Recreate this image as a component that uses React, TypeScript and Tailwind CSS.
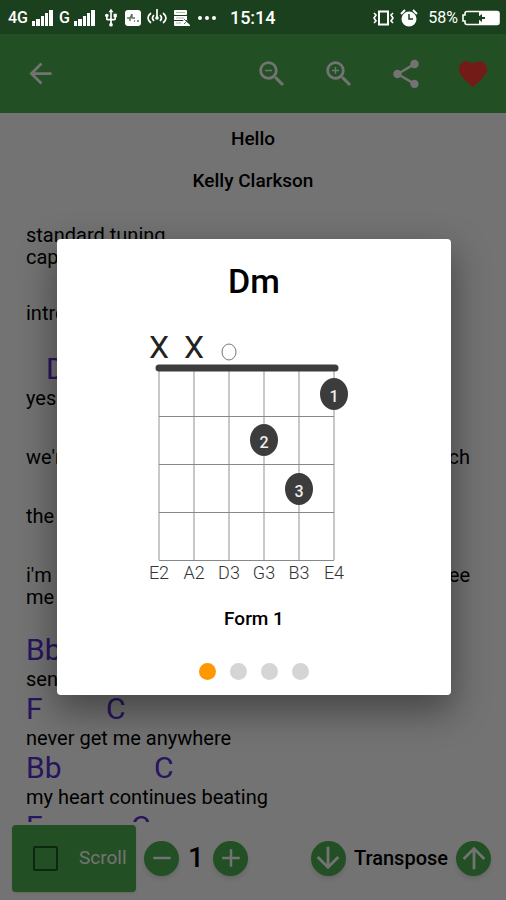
import { MdAdd, MdArrowBack, MdArrowDownward, MdArrowUpward, MdFavorite, MdRemove, MdShare, MdUsb, MdZoomIn, MdZoomOut } from 'react-icons/md';

const strings = ['E2', 'A2', 'D3', 'G3', 'B3', 'E4'];
const frets = [86, 134, 182, 230];

// string is 0-5 from the low E, y is the centre of the finger dot
const fingers = [
  { string: 5, y: 64, label: '1' },
  { string: 3, y: 110, label: '2' },
  { string: 4, y: 159, label: '3' },
];

const stringX = (index: number) => 19 + index * 35;

const SignalBars = () => (
  <svg className="w-[21px] h-[18px]" viewBox="0 0 21 18" fill="currentColor">
    <rect x="0" y="12" width="3" height="5" />
    <rect x="4" y="10" width="4" height="7" />
    <rect x="9" y="7" width="3" height="10" />
    <rect x="13" y="4" width="3" height="13" />
    <rect x="17" y="1" width="4" height="16" />
  </svg>
);

const StatusBar = () => (
  <div className="relative z-20 h-[34px] shrink-0 bg-[#1b401d] text-white flex items-center pl-2 pr-1.5 pt-0.5">
    <span className="text-base font-medium mr-1">4G</span>
    <SignalBars />
    <span className="text-base font-medium ml-1.5 mr-1">G</span>
    <SignalBars />
    <MdUsb className="w-5 h-5 ml-1.5" />
    <svg className="w-4 h-4 ml-1" viewBox="0 0 16 16">
      <rect width="16" height="16" rx="3" fill="#fff" />
      <path d="M2 8h3l2-4M7 4v4h3M5 8v3M9 11h1M12 11h2" stroke="#587059" strokeWidth="1.400" fill="none" />
    </svg>
    <svg className="w-5 h-[18px] ml-1.5" viewBox="0 0 20 18" fill="none" stroke="#fff" strokeWidth="1.700">
      <path d="M4 4Q-2 9 4 14M7 6Q4 9 7 12M16 4Q22 9 16 14M13 6Q16 9 13 12M10 0v8" />
      <circle cx="10" cy="9" r="1.800" fill="#fff" stroke="none" />
    </svg>
    <svg className="w-[17px] h-4 ml-1.5" viewBox="0 0 17 16" fill="#fff">
      <path d="M2 0h11q1 0 1 1v3q0 1-1 1H2q-1 0-1-1V1q0-1 1-1zM1 6h13v4H1zM1 11h9l1-2 6 6v1H2q-1 0-1-1z" />
      <path d="M3 2.500h9M3 8h8M3 13h5" stroke="#a9b8aa" />
      <path d="M11 9l4 4M15 10l-4 4" stroke="#587059" />
    </svg>
    <svg className="w-[18px] h-4 ml-2" viewBox="0 0 18 16" fill="#fff">
      <circle cx="2" cy="8" r="2" />
      <circle cx="9" cy="8" r="2" />
      <circle cx="16" cy="8" r="2" />
    </svg>
    <span className="text-lg font-medium ml-3.5">15:14</span>

    <svg className="w-[21px] h-4 ml-auto" viewBox="0 0 21 16" fill="none" stroke="#fff">
      <rect x="6" y="1.500" width="9" height="13" strokeWidth="2" />
      <path d="M1 3l2 2-2 3 2 3-2 2M20 3l-2 2 2 3-2 3 2 2" strokeWidth="1.600" />
    </svg>
    <svg className="w-[18px] h-[18px] ml-1.5" viewBox="0 0 18 18">
      <circle cx="9" cy="10" r="7.500" fill="#fff" />
      <path d="M1 5l4-4M17 5l-4-4" stroke="#fff" strokeWidth="2" />
      <path d="M9 5v5h4" stroke="#1b401d" strokeWidth="1.500" fill="none" />
    </svg>
    <span className="text-base ml-2.5 mr-1">58%</span>
    <svg className="w-[38px] h-4" viewBox="0 0 38 16">
      <path d="M5 1.500h30q2 0 2 2v9q0 2-2 2H5q-2 0-2-2V11H1V5h2V3.500q0-2 2-2z" fill="none" stroke="#fff" strokeWidth="1.600" />
      <path d="M17 2h18q2 0 2 2v8q0 2-2 2H17z" fill="#fff" />
      <path d="M20 4v3h3v2h-3v3l-4-3V7z" fill="#1b401d" />
    </svg>
  </div>
);

const Toolbar = () => {
  const buttonClass = "w-[67px] h-full flex items-center justify-center";

  return (
    <header className="h-[79px] shrink-0 bg-[#4caf50] text-white flex items-center">
      <button aria-label="Back" className="w-20 h-full flex items-center justify-center mr-auto">
        <MdArrowBack className="w-[33px] h-[33px]" />
      </button>
      <button aria-label="Zoom out" className={buttonClass}>
        <MdZoomOut className="w-[34px] h-[34px]" />
      </button>
      <button aria-label="Zoom in" className={buttonClass}>
        <MdZoomIn className="w-[34px] h-[34px]" />
      </button>
      <button aria-label="Share" className={buttonClass}>
        <MdShare className="w-[34px] h-[34px]" />
      </button>
      <button aria-label="Favorite" className={buttonClass}>
        <MdFavorite className="w-[34px] h-[34px] text-[#ff3d33]" />
      </button>
    </header>
  );
};

const Chords = ({ children }: { children?: React.ReactNode }) => (
  <div className="h-[37px] text-[30px] leading-[37px] text-[#5a2fd0] flex">{children}</div>
);

const Song = () => (
  <main className="flex-1 min-h-0 overflow-hidden">
    <div className="text-center text-[19px] leading-[42px] font-medium pt-[5px]">
      <h1>Hello</h1>
      <h2>Kelly Clarkson</h2>
    </div>
    <div className="pl-[26px] pr-9 pt-[22px] text-[20px] leading-[22px]">
      <p>standard tuning</p>
      <p>capo 1</p>
      <p className="pt-[34px]">intro</p>
      <div className="pt-[26px]">
        <Chords><span className="ml-5">Dm</span></Chords>
      </div>
      <p>yes</p>
      <Chords />
      <p className="flex justify-between"><span>we&apos;re</span><span>ch</span></p>
      <Chords />
      <p>the</p>
      <Chords />
      <p className="flex justify-between"><span>i&apos;m</span><span>see</span></p>
      <p>me</p>
      <div className="pt-[23px]">
        <Chords>Bb</Chords>
      </div>
      <p>send</p>
      <Chords>
        <span className="w-20">F</span>
        <span>C</span>
      </Chords>
      <p>never get me anywhere</p>
      <Chords>
        <span className="w-32">Bb</span>
        <span>C</span>
      </Chords>
      <p>my heart continues beating</p>
      <Chords>
        <span className="w-[105px]">F</span>
        <span>C</span>
      </Chords>
    </div>
  </main>
);

const Controls = () => {
  const roundClass = "w-[35px] h-[35px] rounded-full bg-[#4caf50] text-white shadow-md flex items-center justify-center";

  return (
    <footer className="h-[78px] shrink-0 pl-3 pr-[15px] pb-1.5 flex items-center">
      <label className="w-[124px] h-[67px] rounded bg-[#4caf50] text-white shadow flex items-center pl-[21px]">
        <input type="checkbox" className="appearance-none w-[25px] h-[25px] border-2 border-[#1f5a22] rounded-xs" />
        <span className="text-[19px] ml-[21px]">Scroll</span>
      </label>
      <button aria-label="Slower" className={`${roundClass} ml-2`}>
        <MdRemove className="w-[30px] h-[30px]" />
      </button>
      <span className="w-[34px] text-center text-[28px] font-medium">1</span>
      <button aria-label="Faster" className={roundClass}>
        <MdAdd className="w-[30px] h-[30px]" />
      </button>
      <button aria-label="Transpose down" className={`${roundClass} ml-auto`}>
        <MdArrowDownward className="w-[34px] h-[34px]" />
      </button>
      <span className="mx-2 text-[20px] font-medium">Transpose</span>
      <button aria-label="Transpose up" className={roundClass}>
        <MdArrowUpward className="w-[34px] h-[34px]" />
      </button>
    </footer>
  );
};

const ChordDiagram = () => (
  <svg className="w-[228px] h-[255px]" viewBox="0 0 228 255" textAnchor="middle">
    {strings.map((name, index) => (
      <g key={name}>
        <line x1={stringX(index)} x2={stringX(index)} y1="38" y2="230" stroke="#c8c8c8" strokeWidth="2" />
        <text x={stringX(index)} y="249" fontSize="18" fontWeight="300" fill="#333">{name}</text>
      </g>
    ))}
    {frets.map((y) => (
      <line key={y} x1="19" x2="194" y1={y + 0.5} y2={y + 0.5} stroke="#888" />
    ))}
    <line x1="19" x2="195" y1="38" y2="38" stroke="#3c3c3c" strokeWidth="7" strokeLinecap="round" />
    <text x={stringX(0)} y="28" fontSize="32" fill="#222">X</text>
    <text x={stringX(1)} y="28" fontSize="32" fill="#222">X</text>
    <ellipse cx={stringX(2)} cy="22" rx="7" ry="8" fill="#fff" stroke="#777" />
    {fingers.map((finger) => (
      <g key={finger.label}>
        <ellipse cx={stringX(finger.string)} cy={finger.y} rx="14" ry="16" fill="#3c3c3c" />
        <text x={stringX(finger.string)} y={finger.y + 8} fontSize="16" fontWeight="500" fill="#eee">{finger.label}</text>
      </g>
    ))}
  </svg>
);

const ChordDialog = () => {
  const forms = [1, 2, 3, 4];

  return (
    <div className="absolute inset-0 z-10 pt-[34px] pl-0.5 bg-black/55 flex items-center justify-center">
      <div role="dialog" aria-label="Dm chord" className="w-full mx-[55px] rounded bg-white flex flex-col items-center pt-5 pb-[15px] shadow-[0_14px_36px_2px_rgba(0,0,0,0.4)]">
        <h2 className="text-[34px] leading-[44px] font-medium">Dm</h2>
        <div className="pt-[27px]">
          <ChordDiagram />
        </div>
        <p className="pt-[22px] text-[19px] leading-6 font-medium">Form 1</p>
        <div className="flex gap-3.5 pt-8">
          {forms.map((form) => (
            <button
              key={form}
              aria-label={`Form ${form}`}
              className={`w-[17px] h-[17px] rounded-full ${form === 1 ? 'bg-[#ff9800]' : 'bg-[#d5d5d5]'}`}
            />
          ))}
        </div>
      </div>
    </div>
  );
};

const App = () => {
  return (
    <div className="relative h-screen overflow-hidden flex flex-col bg-white text-black font-['Roboto',sans-serif]">
      <StatusBar />
      <Toolbar />
      <Song />
      <Controls />
      <ChordDialog />
    </div>
  );
};

export default App;
